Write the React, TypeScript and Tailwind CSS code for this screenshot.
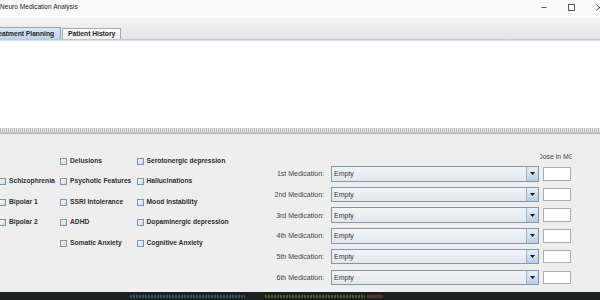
import React from "react";

const F = { fontFamily: '"Liberation Sans", Arial, sans-serif' };

function Check({ label }: { label: string }) {
  return (
    <div className="flex items-center h-[20.5px] gap-[3px]">
      <span className="w-[7px] h-[7px] shrink-0 border border-[#8193a9] bg-gradient-to-br from-[#f6f8fb] to-[#cfdae6]" />
      <span className="text-[6.7px] font-bold text-[#2e2e2e] whitespace-nowrap leading-none">{label}</span>
    </div>
  );
}

function Empty() {
  return <div className="h-[20.5px]" />;
}

function MedRow({ label }: { label: string }) {
  return (
    <div className="flex items-center h-[20.7px]">
      <div className="w-[64px] text-right text-[7px] text-[#444] whitespace-nowrap leading-none">{label}</div>
      <div className="ml-[7px] w-[208px] h-[15.5px] flex border border-[#8496ab] bg-gradient-to-b from-[#f2f4f7] to-[#e2e7ec]">
        <div className="flex-1 flex items-center pl-[2px] text-[7px] text-[#333] leading-none">Empty</div>
        <div className="w-[12px] h-full border-l border-[#9fb3c8] bg-gradient-to-b from-[#e9f0f8] to-[#b9cde3] flex items-center justify-center">
          <svg width="5" height="3" viewBox="0 0 5 3">
            <path d="M0 0 H5 L2.5 3 Z" fill="#111" />
          </svg>
        </div>
      </div>
      <div className="ml-[4px] w-[28px] h-[13.5px] bg-white border border-[#acacac]" />
    </div>
  );
}

export default function App() {
  return (
    <div className="w-[600px] h-[300px] overflow-hidden flex flex-col bg-white" style={F}>
      {/* Title bar */}
      <div className="h-[18px] shrink-0 bg-[#fafafa] flex items-center relative">
        <span className="text-[6.6px] text-[#222] leading-none pl-[0px] -mt-[4px]">Neuro Medication Analysis</span>
        <div className="ml-auto flex items-center -mt-[4px]">
          <svg width="6" height="6" viewBox="0 0 6 6" className="mr-[21px]">
            <path d="M0.5 3.5 H5.5" stroke="#333" strokeWidth="0.8" />
          </svg>
          <svg width="7" height="7" viewBox="0 0 7 7" className="mr-[21px]">
            <rect x="0.5" y="0.5" width="6" height="6" fill="none" stroke="#333" strokeWidth="0.8" />
          </svg>
          <svg width="6" height="7" viewBox="0 0 6 7" className="-mr-[2px]">
            <path d="M0.5 0.5 L6 6.5 M6 0.5 L0.5 6.5" stroke="#333" strokeWidth="0.8" />
          </svg>
        </div>
      </div>

      {/* Tab strip */}
      <div className="h-[21px] shrink-0 bg-gradient-to-b from-[#f3f3f3] to-[#e4e4e4] flex items-end">
        <div className="ml-[-12px] h-[12.5px] pl-[3px] pr-[6px] pt-[1.5px] flex items-center bg-gradient-to-b from-[#dce8f5] to-[#bcd2ea] border border-b-0 border-[#8ea5c2]">
          <span className="text-[6.7px] font-bold text-[#222] leading-none">Treatment Planning</span>
        </div>
        <div className="ml-[1px] h-[11.5px] px-[5px] pt-[1.5px] flex items-center bg-gradient-to-b from-[#fcfcfc] to-[#efefef] border border-b-0 border-[#a9a9a9]">
          <span className="text-[6.7px] font-bold text-[#222] leading-none">Patient History</span>
        </div>
      </div>
      <div className="h-[2px] shrink-0 bg-[#b7c9e0] border-b border-[#d6e0ee]" />

      {/* White content area */}
      <div className="h-[87px] shrink-0 bg-white" />

      {/* Split divider */}
      <div className="h-[7px] shrink-0 flex flex-col">
        <div className="h-[4px] bg-[repeating-linear-gradient(90deg,#b4b4b4_0px,#b4b4b4_1px,#f2f2f2_1px,#f2f2f2_2px)]" />
        <div className="h-[1.5px] bg-[#c2c2c2]" />
        <div className="flex-1 bg-[#e6e6e6]" />
      </div>

      {/* Lower panel */}
      <div className="h-[157px] shrink-0 bg-[#eeeeee] flex items-start">
        <div className="ml-[-1px] mt-[16px] grid grid-cols-[61px_76.5px_auto] grid-flow-col grid-rows-[repeat(5,20.5px)]">
          <Empty />
          <Check label="Schizophrenia" />
          <Check label="Bipolar 1" />
          <Check label="Bipolar 2" />
          <Empty />
          <Check label="Delusions" />
          <Check label="Psychotic Features" />
          <Check label="SSRI Intolerance" />
          <Check label="ADHD" />
          <Check label="Somatic Anxiety" />
          <Check label="Serotonergic depression" />
          <Check label="Hallucinations" />
          <Check label="Mood Instability" />
          <Check label="Dopaminergic depression" />
          <Check label="Cognitive Anxiety" />
        </div>
        <div className="ml-auto w-[340px] pt-[17px] flex flex-col">
          <div className="h-[11.5px] flex items-center">
            <div className="ml-[280px] w-[32px] flex justify-center overflow-hidden">
              <span className="text-[6.9px] text-[#444] whitespace-nowrap leading-none">Dose in MG</span>
            </div>
          </div>
          <MedRow label="1st Medication:" />
          <MedRow label="2nd Medication:" />
          <MedRow label="3rd Medication:" />
          <MedRow label="4th Medication:" />
          <MedRow label="5th Medication:" />
          <MedRow label="6th Medication:" />
        </div>
      </div>

      {/* Bottom dark strip */}
      <div className="h-[8px] shrink-0 bg-[#1d2020] flex items-center">
        <div className="ml-[130px] w-[115px] h-[3px] mt-[1px] bg-[repeating-linear-gradient(90deg,#3c6a86_0px,#3c6a86_2px,#1d2020_2px,#1d2020_3px)] opacity-70" />
        <div className="ml-[20px] w-[100px] h-[3px] mt-[1px] bg-[repeating-linear-gradient(90deg,#5f7a2a_0px,#5f7a2a_2px,#1d2020_2px,#1d2020_3px)] opacity-70" />
        <div className="ml-[2px] w-[16px] h-[3px] mt-[1px] bg-[#6a4a3a] opacity-60" />
      </div>
    </div>
  );
}
